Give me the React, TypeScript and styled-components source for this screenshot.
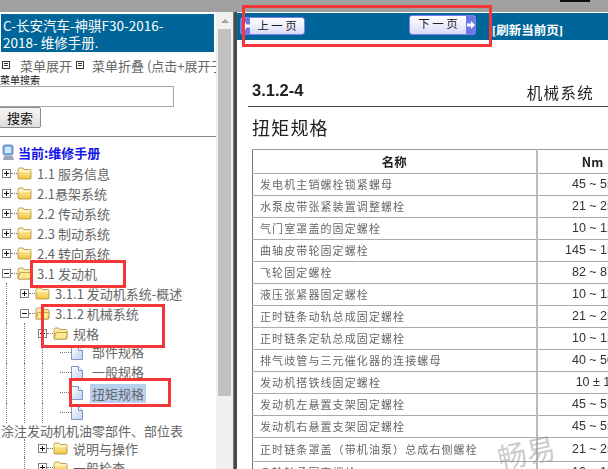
import styled, { createGlobalStyle } from "styled-components"

const GlobalStyle = createGlobalStyle`
  html, body {
    margin: 0;
    padding: 0;
    overflow: hidden;
    background: #fff;
    font-family: "Noto Sans CJK SC", "Liberation Sans", sans-serif;
  }
`

const Screen = styled.div`
  position: relative;
  width: 608px;
  height: 469px;
  overflow: hidden;
`

const TopBar = styled.div`
  position: relative;
  height: 12px;
  background: #a0a0a0;

  &::after {
    content: "";
    position: absolute;
    left: 560px;
    top: 0;
    width: 30px;
    height: 2px;
    background: #111;
  }
`

const Main = styled.div`
  display: grid;
  grid-template-columns: 216px 17px 4px 371px;
  height: 457px;
`

/* left menu */
const Sidebar = styled.div`
  display: flex;
  flex-direction: column;
  overflow: hidden;
  padding-top: 2px;
  background: #fff;

  & > * {
    flex: none;
  }
`

const Title = styled.div`
  margin: 0 2px 0 1px;
  height: 38px;
  padding: 3px 40px 0 2px;
  box-sizing: border-box;
  background: #006699;
  color: #fff;
  font-size: 13.5px;
  line-height: 17px;
  width: 213px;
`

const MenuRow = styled.div`
  display: flex;
  align-items: center;
  margin-top: 5px;
  margin-bottom: 1px;
  height: 16px;
  white-space: nowrap;
  font-size: 13px;
  color: #666;
`

const MenuGlyph = styled.span`
  box-sizing: border-box;
  width: 8px;
  height: 8px;
  margin: 0 8px 0 2px;
  flex: none;
  border: 1px solid #333;
  background: linear-gradient(#333, #333) center 1px / 4px 1px no-repeat,
    linear-gradient(#333, #333) center 3px / 4px 1px no-repeat;
`

const MenuGap = styled.span`
  margin-left: 2px;
  margin-right: 2px;
`

const SearchLabel = styled.div`
  height: 12px;
  font-size: 10px;
  line-height: 11px;
  color: #111;
  white-space: nowrap;
`

const SearchInput = styled.input`
  display: block;
  box-sizing: border-box;
  width: 175px;
  height: 21px;
  margin: 0 0 0 -1px;
  border: 1px solid #a5a5a5;
  background: #fff;
`

const SearchButton = styled.button`
  display: block;
  box-sizing: border-box;
  width: 42px;
  height: 21px;
  margin: 0 0 0 -1px;
  padding: 0;
  border: 1px solid #8c8c8c;
  border-radius: 2px;
  background: linear-gradient(#f6f6f6, #dedede);
  color: #111;
  font-family: inherit;
  font-size: 13px;
  line-height: 18px;
`

const Rule = styled.hr`
  width: 100%;
  height: 1px;
  margin: 8px 0 5px;
  border: 0;
  background: #888;
`

const CurrentRow = styled.div`
  display: flex;
  align-items: center;
  height: 21px;
  padding-left: 2px;
  color: #1414e6;
  font-size: 13px;
  font-weight: 700;
  white-space: nowrap;
`

const TreeRow = styled.div<{ $h?: number }>`
  display: flex;
  align-items: center;
  height: ${(p) => p.$h ?? 20}px;
  white-space: nowrap;
  font-size: 13px;
  color: #666;
`

const Indent = styled.span<{ $line?: boolean }>`
  flex: none;
  align-self: stretch;
  width: 18px;
  box-sizing: border-box;
  padding-left: 6px;

  &::before {
    content: "";
    display: ${(p) => (p.$line ? "block" : "none")};
    height: 100%;
    border-left: 1px dotted #777;
  }
`

const Branch = styled.span`
  flex: none;
  display: flex;
  align-items: center;
  width: 17px;
  padding-left: 2px;
  box-sizing: border-box;

  &::after {
    content: "";
    flex: 1;
    border-top: 1px dotted #777;
  }
`

const LeafBranch = styled.span`
  flex: none;
  width: 17px;
  margin-left: 6px;
  margin-right: -6px;
  height: 1px;
  border-top: 1px dotted #777;
`

const Expander = styled.span<{ $open?: boolean }>`
  flex: none;
  box-sizing: border-box;
  width: 9px;
  height: 9px;
  border: 1px solid #808080;
  background: linear-gradient(#111, #111) center / 5px 1px no-repeat,
    ${(p) => (p.$open ? "none" : "linear-gradient(#111, #111) center / 1px 5px no-repeat")},
    #fff;
`

const Label = styled.span<{ $gap?: number; $selected?: boolean; $raised?: boolean }>`
  margin-left: ${(p) => p.$gap ?? 5}px;
  margin-bottom: ${(p) => (p.$raised ? 3 : 0)}px;
  padding: 0 ${(p) => (p.$selected ? 2 : 0)}px;
  background: ${(p) => (p.$selected ? "#b9cfee" : "transparent")};
`

const WrapLine = styled.div`
  height: 16px;
  padding-left: 1px;
  font-size: 13px;
  line-height: 16px;
  color: #666;
  white-space: nowrap;
`

const Scrollbar = styled.div`
  display: flex;
  flex-direction: column;
  align-items: center;
  padding-top: 7px;
  background: #f0f0f0;
`

const ScrollArrow = styled.span`
  width: 0;
  height: 0;
  border-left: 4px solid transparent;
  border-right: 4px solid transparent;
  border-bottom: 4px solid #a3a3a3;
`

const ScrollThumb = styled.span`
  width: 13px;
  height: 367px;
  margin-top: 6px;
  background: #c1c1c1;
`

const Divider = styled.div`
  background: linear-gradient(90deg, #8a8a8a 0, #3c3c3c 50%, #555 100%);
`

/* right page */
const Content = styled.div`
  overflow: hidden;
  background: #fff;
`

const Band = styled.div`
  display: flex;
  align-items: flex-start;
  height: 27px;
  margin-top: 1px;
  padding-left: 3px;
  background: #006699;
`

const PagerButton = styled.div<{ $next?: boolean }>`
  display: flex;
  flex-direction: ${(p) => (p.$next ? "row" : "row-reverse")};
  align-items: stretch;
  box-sizing: border-box;
  width: ${(p) => (p.$next ? 67 : 65)}px;
  height: ${(p) => (p.$next ? 20 : 18)}px;
  margin: ${(p) => (p.$next ? "2px 0 0 104px" : "4px 0 0 0")};
  border: 1px solid #7d7df0;
  border-radius: 3px;
  overflow: hidden;
  background: linear-gradient(#fff, #d9dcfa);
  color: #222;
  font-size: 11.5px;
  line-height: 15px;
`

const PagerText = styled.span`
  flex: 1;
  text-align: center;
  white-space: pre;
`

const PagerArrow = styled.span`
  flex: none;
  display: flex;
  align-items: center;
  justify-content: center;
  width: 9px;
  background: #6d78e6;
`

const Refresh = styled.a`
  margin: 11px 0 0 16px;
  color: #fff;
  font-family: "Liberation Serif", "Noto Sans CJK SC", serif;
  font-size: 12.5px;
  font-weight: 700;
  line-height: 15px;
  white-space: nowrap;
`

const Sheet = styled.div`
  padding: 39px 0 0 11px;
  filter: blur(0.35px);
`

const SheetHead = styled.div`
  display: flex;
  align-items: flex-start;
  justify-content: space-between;
  height: 27px;
  padding: 0 14px 0 4px;
  border-bottom: 1px solid #444;
  color: #222;
`

const SectionNo = styled.span`
  font-family: "Liberation Sans", sans-serif;
  font-size: 16.5px;
  font-weight: 700;
  line-height: 22px;
`

const SectionName = styled.span`
  margin-top: 2px;
  font-size: 15.5px;
  letter-spacing: 1.3px;
  line-height: 22px;
`

const SheetTitle = styled.h1`
  margin: 8px 0 10px 4px;
  color: #222;
  font-size: 18px;
  font-weight: 400;
  line-height: 24px;
  letter-spacing: 1.2px;
`

const Table = styled.table`
  width: 396px;
  margin-left: 4px;
  border-collapse: collapse;
  table-layout: fixed;
  border-top: 1px solid #999;
  border-left: 1px solid #777;
`

const HeadCell = styled.th`
  height: 23px;
  padding: 0;
  border-bottom: 1px solid #aaa;
  border-right: 2px solid #bbb;
  color: #222;
  font-size: 12.5px;
  font-family: "Noto Sans CJK SC", "Liberation Sans", sans-serif;
`

const NameCell = styled.td<{ $h?: number }>`
  height: ${(p) => p.$h ?? 21}px;
  padding: 0 0 1px 7px;
  box-sizing: content-box;
  border-bottom: 1px solid #aaa;
  border-right: 2px solid #bbb;
  color: #666;
  font-size: 11px;
  line-height: 14px;
  letter-spacing: 1.1px;
  white-space: nowrap;
`

const ValueCell = styled.td`
  padding: 0 0 1px;
  border-bottom: 1px solid #aaa;
  text-align: center;
  color: #333;
  font-family: "Liberation Sans", sans-serif;
  font-size: 12.5px;
  line-height: 14px;
  white-space: nowrap;
`

/* things lying over the picture */
const Watermark = styled.div`
  position: absolute;
  left: 497px;
  top: 435px;
  color: rgba(140, 140, 140, 0.45);
  font-size: 29px;
  line-height: 32px;
  transform: rotate(-12deg);
`

const RedBox = styled.div<{ $x: number; $y: number; $w: number; $h: number }>`
  position: absolute;
  left: ${(p) => p.$x}px;
  top: ${(p) => p.$y}px;
  width: ${(p) => p.$w}px;
  height: ${(p) => p.$h}px;
  box-sizing: border-box;
  border: 3px solid #f43636;
`

function Folder({ open }: { open?: boolean }) {
  return (
    <svg width="15" height="14" viewBox="0 0 15 14" style={{ flex: "none" }}>
      <defs>
        <linearGradient id="fold" x1="0" y1="0" x2="0" y2="1">
          <stop offset="0" stopColor="#fff6c0" />
          <stop offset="1" stopColor="#f2c53d" />
        </linearGradient>
      </defs>
      <path d="M1 3.5 L2 2 H6 L7.2 3.5 H13 Q14 3.5 14 4.5 V12 Q14 13 13 13 H2 Q1 13 1 12 Z" fill="url(#fold)" stroke="#b08c3a" strokeWidth="0.8" />
      {open ? <path d="M3 6.5 H14.5 L12.8 13 H1 Z" fill="#ffe98a" stroke="#b08c3a" strokeWidth="0.7" /> : <path d="M1.5 5 H13.5" stroke="#fffbe0" strokeWidth="1" />}
    </svg>
  )
}

function PageIcon() {
  return (
    <svg width="12" height="14" viewBox="0 0 12 14" style={{ flex: "none" }}>
      <defs>
        <linearGradient id="pg" x1="0" y1="0" x2="1" y2="1">
          <stop offset="0" stopColor="#ffffff" />
          <stop offset="1" stopColor="#bcd2f2" />
        </linearGradient>
      </defs>
      <path d="M0.5 0.5 H7.5 L11.5 4.5 V13.5 H0.5 Z" fill="url(#pg)" stroke="#8396c4" />
      <path d="M7.5 0.5 V4.5 H11.5" fill="#fff" stroke="#8396c4" />
    </svg>
  )
}

function ComputerIcon() {
  return (
    <svg width="13" height="17" viewBox="0 0 13 17" style={{ flex: "none", marginRight: 3 }}>
      <rect x="1" y="1" width="10" height="10" rx="2" fill="#79aef0" stroke="#6b86a8" />
      <rect x="3" y="3" width="6" height="6" fill="#cfe6ff" />
      <path d="M2 12 H11 L12 16 H1 Z" fill="#9aa7b8" />
    </svg>
  )
}

function PagerTip({ left }: { left?: boolean }) {
  return (
    <svg width="8" height="8" viewBox="0 0 8 8">
      <path d={left ? "M4 0 L0 4 L4 8 V5.5 H8 V2.5 H4 Z" : "M4 0 L8 4 L4 8 V5.5 H0 V2.5 H4 Z"} fill="#fff" />
    </svg>
  )
}

type Node = {
  text: string
  guides: boolean[]
  kind: "closed" | "open" | "leaf"
  gap?: number
  selected?: boolean
  raised?: boolean
  h?: number
}

const topNodes: Node[] = [
  { text: "1.1 服务信息", guides: [], kind: "closed" },
  { text: "2.1悬架系统", guides: [], kind: "closed" },
  { text: "2.2 传动系统", guides: [], kind: "closed" },
  { text: "2.3 制动系统", guides: [], kind: "closed" },
  { text: "2.4 转向系统", guides: [], kind: "closed" },
  { text: "3.1 发动机", guides: [], kind: "open" },
  { text: "3.1.1 发动机系统-概述", guides: [true], kind: "closed" },
  { text: "3.1.2 机械系统", guides: [true], kind: "open" },
  { text: "规格", guides: [true, true], kind: "open" },
  { text: "部件规格", guides: [true, true, true], kind: "leaf", gap: 9, raised: true },
  { text: "一般规格", guides: [true, true, true], kind: "leaf", gap: 9, raised: true },
  { text: "扭矩规格", guides: [true, true, true], kind: "leaf", gap: 7, selected: true },
  { text: "", guides: [true, true, true], kind: "leaf" },
]

const bottomNodes: Node[] = [
  { text: "说明与操作", guides: [false, true], kind: "closed", h: 18 },
  { text: "一般检查", guides: [false, true], kind: "closed" },
]

const torque = [
  ["发电机主销螺栓锁紧螺母", "45 ~ 55"],
  ["水泵皮带张紧装置调整螺栓", "21 ~ 25"],
  ["气门室罩盖的固定螺栓", "10 ~ 12"],
  ["曲轴皮带轮固定螺栓", "145 ~ 155"],
  ["飞轮固定螺栓", "82 ~ 87"],
  ["液压张紧器固定螺栓", "10 ~ 12"],
  ["正时链条动轨总成固定螺栓", "21 ~ 25"],
  ["正时链条定轨总成固定螺栓", "10 ~ 12"],
  ["排气歧管与三元催化器的连接螺母", "40 ~ 50"],
  ["发动机搭铁线固定螺栓", "10 ± 1"],
  ["发动机左悬置支架固定螺栓", "45 ~ 55"],
  ["发动机右悬置支架固定螺栓", "45 ~ 55"],
  ["正时链条罩盖（带机油泵）总成右侧螺栓", "21 ~ 25"],
  ["凸轮轴承固定螺栓", "10 ~ 12"],
]

function TreeNode({ node }: { node: Node }) {
  return (
    <TreeRow $h={node.h}>
      {node.guides.map((line, i) => (
        <Indent key={i} $line={line} />
      ))}
      {node.kind === "leaf" ? (
        <>
          <LeafBranch />
          <PageIcon />
        </>
      ) : (
        <>
          <Branch>
            <Expander $open={node.kind === "open"} />
          </Branch>
          <Folder open={node.kind === "open"} />
        </>
      )}
      <Label $gap={node.gap} $selected={node.selected} $raised={node.raised}>
        {node.text}
      </Label>
    </TreeRow>
  )
}

export default function App() {
  return (
    <Screen>
      <GlobalStyle />
      <TopBar />
      <Main>
        <Sidebar>
          <Title>C-长安汽车-神骐F30-2016-2018- 维修手册.</Title>
          <MenuRow>
            <MenuGlyph />
            <MenuGap>菜单展开</MenuGap>
            <MenuGlyph />
            菜单折叠 (点击+展开子菜单)
          </MenuRow>
          <SearchLabel>菜单搜索</SearchLabel>
          <SearchInput />
          <SearchButton>搜索</SearchButton>
          <Rule />
          <CurrentRow>
            <ComputerIcon />
            当前:维修手册
          </CurrentRow>
          {topNodes.map((node, i) => (
            <TreeNode key={i} node={node} />
          ))}
          <WrapLine>涂注发动机机油零部件、部位表</WrapLine>
          {bottomNodes.map((node, i) => (
            <TreeNode key={i} node={node} />
          ))}
        </Sidebar>
        <Scrollbar>
          <ScrollArrow />
          <ScrollThumb />
        </Scrollbar>
        <Divider />
        <Content>
          <Band>
            <PagerButton>
              <PagerText>上 一 页</PagerText>
              <PagerArrow>
                <PagerTip left />
              </PagerArrow>
            </PagerButton>
            <PagerButton $next>
              <PagerText>下 一 页</PagerText>
              <PagerArrow>
                <PagerTip />
              </PagerArrow>
            </PagerButton>
            <Refresh>[刷新当前页]</Refresh>
          </Band>
          <Sheet>
            <SheetHead>
              <SectionNo>3.1.2-4</SectionNo>
              <SectionName>机械系统</SectionName>
            </SheetHead>
            <SheetTitle>扭矩规格</SheetTitle>
            <Table>
              <colgroup>
                <col style={{ width: 284 }} />
                <col style={{ width: 112 }} />
              </colgroup>
              <thead>
                <tr>
                  <HeadCell>名称</HeadCell>
                  <HeadCell>Nm</HeadCell>
                </tr>
              </thead>
              <tbody>
                {torque.map(([name, value], i) => (
                  <tr key={name}>
                    <NameCell $h={i === 12 ? 22 : 20}>{name}</NameCell>
                    <ValueCell>{value}</ValueCell>
                  </tr>
                ))}
              </tbody>
            </Table>
          </Sheet>
        </Content>
      </Main>
      <Watermark>畅易</Watermark>
      <RedBox $x={242} $y={5} $w={250} $h={42} />
      <RedBox $x={30} $y={260} $w={96} $h={28} />
      <RedBox $x={41} $y={304} $w={124} $h={44} />
      <RedBox $x={69} $y={378} $w={102} $h={29} />
    </Screen>
  )
}
